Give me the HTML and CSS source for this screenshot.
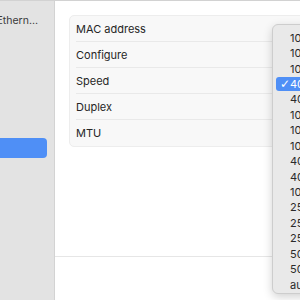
FILE: index.html
```html
<!DOCTYPE html>
<html lang="en">
<head>
    <meta charset="UTF-8">
    <meta name="viewport" content="width=device-width, initial-scale=1.0">
    <title>Network - Ethernet</title>
    <link rel="stylesheet" href="styles.css">
</head>
<body>
    <div class="window">
        <aside class="sidebar">
            <div class="sidebar-item">
                <span class="sidebar-label">USB Ethern…</span>
            </div>
            <div class="sidebar-item selected"></div>
        </aside>

        <main class="main">
            <div class="content">
                <div class="card">
                    <div class="row"><span>MAC address</span></div>
                    <div class="row"><span>Configure</span></div>
                    <div class="row"><span>Speed</span></div>
                    <div class="row"><span>Duplex</span></div>
                    <div class="row"><span>MTU</span></div>
                </div>
            </div>
            <div class="footer"></div>
        </main>

        <div class="menu">
            <div class="menu-item">10baseT/UTP</div>
            <div class="menu-item">100baseTX</div>
            <div class="menu-item">1000baseT</div>
            <div class="menu-item checked"><span class="check">✓</span>40GbaseCR4</div>
            <div class="menu-item">40GbaseSR4</div>
            <div class="menu-item">10GbaseT</div>
            <div class="menu-item">10GbaseSR</div>
            <div class="menu-item">10GbaseLR</div>
            <div class="menu-item">40GbaseLR4</div>
            <div class="menu-item">40GbaseKR4</div>
            <div class="menu-item">10GbaseCX4</div>
            <div class="menu-item">25GbaseCR</div>
            <div class="menu-item">25GbaseSR</div>
            <div class="menu-item">25GbaseLR</div>
            <div class="menu-item">50GbaseCR2</div>
            <div class="menu-item">50GbaseSR2</div>
            <div class="menu-item">autoselect</div>
        </div>
    </div>
</body>
</html>
```

FILE: styles.css
```css
body {
    margin: 0;
    padding: 0;
    font-family: Inter, "Noto Sans", sans-serif;
    background: #ffffff;
    width: 300px;
    height: 300px;
    overflow: hidden;
}

.window {
    position: relative;
    display: flex;
    height: 300px;
    border-top: 1px solid #d2d2d2;
    box-sizing: border-box;
    overflow: hidden;
}

.sidebar {
    width: 54px;
    flex-shrink: 0;
    background: #e3e3e3;
    border-right: 1px solid #d3d3d3;
    padding-top: 10px;
    display: flex;
    flex-direction: column;
}

.sidebar-item {
    width: 38px;
    height: 18px;
    display: flex;
    align-items: center;
    justify-content: flex-end;
    overflow: hidden;
}

.sidebar-label {
    flex-shrink: 0;
    font-size: 10.5px;
    color: #3a3a3a;
    white-space: nowrap;
}

.sidebar-item.selected {
    margin-top: 109px;
    width: 47px;
    height: 20px;
    background: #4f8ff6;
    border-radius: 0 4px 4px 0;
}

.main {
    flex: 1;
    display: flex;
    flex-direction: column;
    overflow: hidden;
}

.content {
    height: 256px;
    padding: 14px 0 0 14px;
    box-sizing: border-box;
    border-bottom: 1px solid #e6e6e6;
}

.card {
    width: 280px;
    background: #f8f8f8;
    border: 1px solid #ededed;
    border-radius: 5px;
    padding: 0 0 0 6px;
}

.row {
    height: 26px;
    display: flex;
    align-items: center;
    font-size: 11px;
    color: #262626;
    border-bottom: 1px solid #e9e9e9;
    box-sizing: border-box;
}

.row:last-child {
    border-bottom: none;
}

.footer {
    flex: 1;
}

.menu {
    position: absolute;
    left: 272px;
    top: 23px;
    width: 70px;
    height: 270px;
    padding-top: 5px;
    box-sizing: border-box;
    background: #e9e9e9;
    border: 1px solid #cdcdcd;
    border-radius: 6px;
    box-shadow: 0 3px 10px rgba(0, 0, 0, 0.18);
}

.menu-item {
    height: 15.44px;
    display: flex;
    align-items: center;
    padding-left: 17px;
    font-size: 11px;
    color: #2a2a2a;
    white-space: nowrap;
}

.menu-item.checked {
    margin-left: 3px;
    padding-left: 4px;
    height: 14px;
    margin-top: 0.7px;
    margin-bottom: 0.7px;
    background: #4f8ff6;
    border-radius: 3px;
    color: #ffffff;
}

.check {
    width: 10px;
    font-size: 12px;
    font-family: "DejaVu Sans", sans-serif;
}
```
